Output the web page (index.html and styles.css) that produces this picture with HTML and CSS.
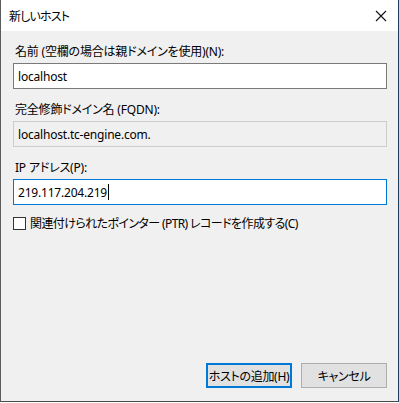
FILE: index.html
```html
<!DOCTYPE html>
<html lang="ja">
<head>
    <meta charset="UTF-8">
    <link rel="stylesheet" href="styles.css">
</head>
<body>
    <div class="window">
        <div class="titlebar">
            <span class="title">新しいホスト</span>
            <svg class="close" width="12" height="12" viewBox="0 0 12 12">
                <path d="M1 1L11 11M11 1L1 11" stroke="#111" stroke-width="1.1" fill="none"/>
            </svg>
        </div>
        <div class="content">
            <div class="label lbl-name">名前 (空欄の場合は親ドメインを使用)(N):</div>
            <div class="field">localhost</div>
            <div class="label">完全修飾ドメイン名 (FQDN):</div>
            <div class="field readonly">localhost.tc-engine.com.</div>
            <div class="label">IP アドレス(P):</div>
            <div class="field focused">219.117.204.219<span class="caret"></span></div>
            <div class="check-row">
                <span class="checkbox"></span>
                <span class="check-text">関連付けられたポインター (PTR) レコードを作成する(C)</span>
            </div>
            <div class="spacer"></div>
            <div class="buttons">
                <div class="btn default">ホストの追加(H)</div>
                <div class="btn">キャンセル</div>
            </div>
        </div>
    </div>
</body>
</html>
```

FILE: styles.css
```css
body {
    margin: 0;
    background: #ffffff;
    font-family: "Noto Sans", "Noto Sans CJK JP", sans-serif;
    font-size: 12px;
    font-feature-settings: "palt";
    color: #000;
}
.window {
    width: 397px;
    height: 401px;
    border-left: 1px solid #5c5c5c;
    border-right: 1px solid #1f3d5c;
    border-bottom: 1px solid #4a4a4a;
    display: flex;
    flex-direction: column;
    background: #f0f0f0;
}
.titlebar {
    height: 31px;
    background: #ffffff;
    display: flex;
    align-items: center;
    justify-content: space-between;
    padding: 0 11px 0 8px;
    flex-shrink: 0;
}
.title {
    font-size: 12px;
    letter-spacing: -0.8px;
    color: #000;
}
.close {
    display: block;
}
.content {
    flex: 1;
    display: flex;
    flex-direction: column;
    padding: 13px 11px 13px 12px;
}
.label {
    line-height: 16px;
    height: 16px;
    margin: 0 0 3px 2px;
    white-space: nowrap;
    letter-spacing: -0.2px;
}
.field {
    height: 26px;
    box-sizing: border-box;
    border: 1px solid #7a7a7a;
    background: #fff;
    padding: 0 4px;
    margin-bottom: 13px;
    white-space: nowrap;
    display: flex;
    align-items: center;
    letter-spacing: -0.2px;
}
.field.readonly {
    background: #f0f0f0;
    border-color: #cccccc;
}
.field.focused {
    border-color: #0078d7;
    margin-bottom: 10px;
}
.caret {
    display: inline-block;
    width: 1px;
    height: 16px;
    background: #000;
    margin-left: 1px;
}
.check-row {
    display: flex;
    align-items: center;
    gap: 4px;
    height: 16px;
}
.check-text {
    letter-spacing: -0.6px;
    white-space: nowrap;
}
.checkbox {
    width: 13px;
    height: 13px;
    box-sizing: border-box;
    border: 1px solid #333;
    background: #fff;
    flex-shrink: 0;
}
.spacer {
    flex: 1;
}
.buttons {
    display: flex;
    justify-content: flex-end;
    gap: 9px;
}
.btn {
    width: 86px;
    height: 25px;
    box-sizing: border-box;
    border: 1px solid #adadad;
    background: #e1e1e1;
    display: flex;
    align-items: center;
    justify-content: center;
    white-space: nowrap;
    letter-spacing: -0.3px;
}
.btn.default {
    border: 2px solid #0078d7;
}
```
